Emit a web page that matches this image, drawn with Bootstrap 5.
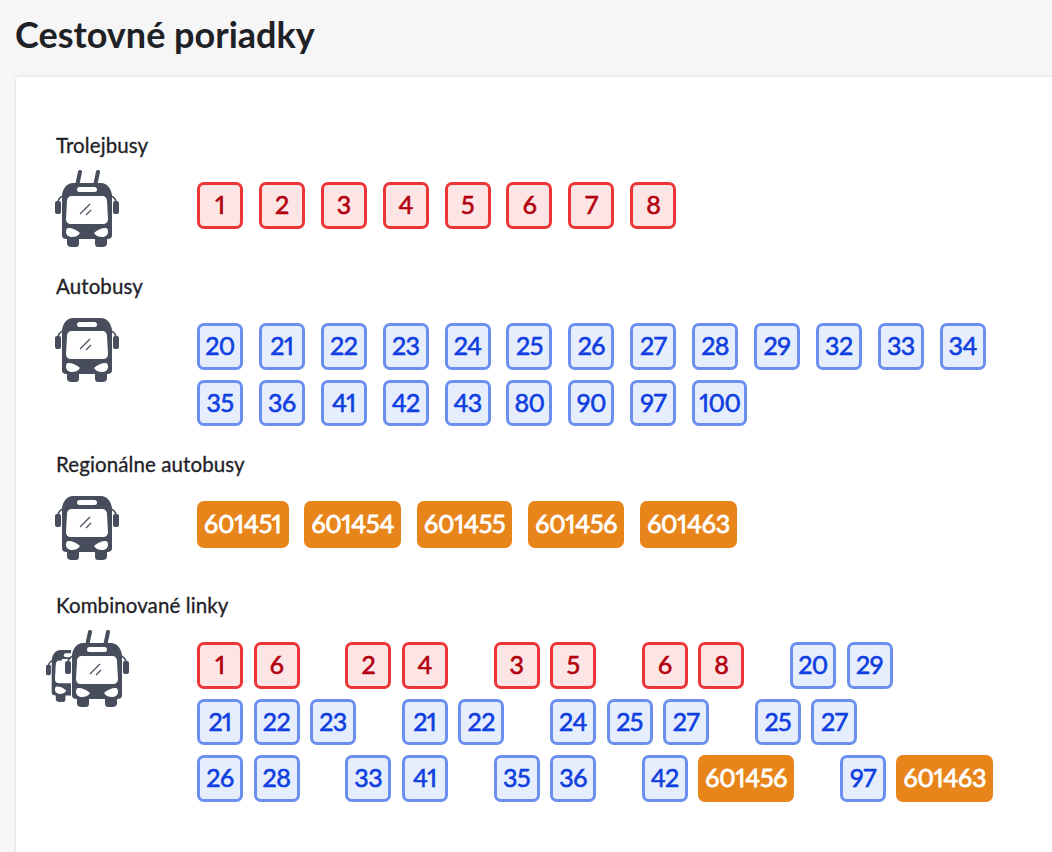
<!DOCTYPE html>
<html lang="sk">
<head>
    <meta charset="UTF-8" />
    <title>Cestovné poriadky</title>
    <meta name="viewport" content="width=device-width, initial-scale=1" />
    <link href="https://cdn.jsdelivr.net/npm/bootstrap@5.3.0/dist/css/bootstrap.min.css" rel="stylesheet" />
    <style>
        body {
            background-color: #f6f6f6;
            color: #1e2126;
            font-family: "Lato", "Open Sans", sans-serif;
            height: 852px;
            overflow: hidden;
        }
        .page-title {
            font-size: 36px;
            font-weight: 700;
            line-height: 40px;
            margin: 0;
            padding: 14px 0 22px 15px;
        }
        .panel {
            background: #fff;
            border: 1px solid #e8e8e8;
            border-right: 0;
            border-radius: 5px 0 0 0;
            box-shadow: 0 -1px 3px rgba(0, 0, 0, .05);
            margin-left: 15px;
            padding: 56px 0 0 40px;
            height: 800px;
        }
        .line-title {
            font-size: 20.5px;
            font-weight: 400;
            letter-spacing: .1px;
            -webkit-text-stroke: .3px #1e2126;
            line-height: 24px;
            margin-bottom: 13px;
        }
        .line-row { min-height: 104px; }
        .icon-col { width: 141px; flex: none; }
        .icon-col svg { display: block; margin-left: -1px; }
        .icon-col .bus-icon { margin-top: 7px; }
        .icon-col .combo-icon { margin-left: -10px; }
        .tags { padding: 12px 0 16px; }
        .tag-line { display: flex; gap: 15.9px; margin-bottom: 10px; }
        .tag-line.combo { gap: 45.75px; }
        .tag-group { display: flex; gap: 10.5px; }
        .tag {
            display: block;
            height: 46.5px;
            min-width: 46px;
            padding: 0 4px;
            border: 3px solid;
            border-radius: 7px;
            text-align: center;
            font-size: 25px;
            font-weight: 400;
            font-variant-numeric: proportional-nums;
            letter-spacing: -.5px;
            line-height: 39px;
            text-decoration: none;
            -webkit-text-stroke: .6px currentColor;
        }
        .tag-red { background: #fde5e6; border-color: #ec3537; color: #b3000f; }
        .tag-blue { background: #e6edfd; border-color: #6b8ff0; color: #0f3fe0; }
        .tag-orange { background: #e8851a; border-color: #e8851a; color: #fff; letter-spacing: -.2px; -webkit-text-stroke: .8px #fff; }
    </style>
</head>
<body>

<svg width="0" height="0" class="d-block position-absolute">
    <symbol id="bus" viewBox="0 0 64 64">
        <path fill="#474d5c" d="M18 0H46C52 0 56 5 57 12V52C57 55 55 56 52 56V60C52 63 50 64 47 64H43C41 64 40 63 40 60V56H24V60C24 63 23 64 21 64H17C14 64 12 63 12 60V56C9 56 7 55 7 52V12C8 5 12 0 18 0Z" />
        <path fill="none" stroke="#474d5c" stroke-width="1.6" d="M8 13C5 14 3.500 16 3 19M56 13C59 14 60.500 16 61 19" />
        <rect x="0" y="18" width="6" height="13" rx="2" fill="#474d5c" />
        <rect x="58" y="18" width="6" height="13" rx="2" fill="#474d5c" />
        <rect x="22" y="4" width="20" height="5" rx="2.5" fill="#fff" />
        <path fill="#fff" d="M17 13H47C50 13 52 15 52 18L53 36C53 39 51 41 48 41H16C13 41 11 39 11 36L12 18C12 15 14 13 17 13Z" />
        <path fill="#fff" d="M13 45C18 45 22 47 25 50C23 53 20 54 17 54C14 54 11 52 11 49C11 46 12 45 13 45ZM51 45C46 45 42 47 39 50C41 53 44 54 47 54C50 54 53 52 53 49C53 46 52 45 51 45Z" />
        <path stroke="#474d5c" stroke-width="1.2" d="M25 31L35 21M31 32L36 27" />
    </symbol>
    <symbol id="poles" viewBox="0 0 64 20">
        <path stroke="#474d5c" stroke-width="4" stroke-linecap="round" fill="none" d="M22 16L25 2M40 16L43 2" />
    </symbol>
</svg>

<h1 class="page-title">Cestovné poriadky</h1>

<div class="panel">
    <div class="line-title">Trolejbusy</div>
    <div class="line-row d-flex">
        <div class="icon-col">
            <svg width="64" height="77" viewBox="0 0 64 77"><use href="#poles" width="64" height="20" /><use href="#bus" y="13" width="64" height="64" /></svg>
        </div>
        <div class="tags" id="trolley"></div>
    </div>

    <div class="line-title">Autobusy</div>
    <div class="line-row d-flex">
        <div class="icon-col">
            <svg class="bus-icon" width="64" height="64"><use href="#bus" width="64" height="64" /></svg>
        </div>
        <div class="tags" id="bus-lines"></div>
    </div>

    <div class="line-title">Regionálne autobusy</div>
    <div class="line-row d-flex">
        <div class="icon-col">
            <svg class="bus-icon" width="64" height="64"><use href="#bus" width="64" height="64" /></svg>
        </div>
        <div class="tags" id="regional"></div>
    </div>

    <div class="line-title">Kombinované linky</div>
    <div class="line-row d-flex">
        <div class="icon-col">
            <svg class="combo-icon" width="83" height="78" viewBox="0 0 83 78">
                <use href="#bus" x="0" y="20" width="52" height="52" />
                <rect x="25" y="14" width="30" height="64" fill="#fff" />
                <rect x="16" y="29" width="10" height="17" fill="#fff" />
                <use href="#poles" x="19" width="64" height="20" />
                <use href="#bus" x="19" y="13" width="64" height="64" />
            </svg>
        </div>
        <div class="tags" id="combined"></div>
    </div>
</div>

<script>
    function tagClass(n) {
        if (n > 1000) return 'tag-orange';
        return n < 10 ? 'tag-red' : 'tag-blue';
    }

    function tagHtml(n) {
        return `<a href="#" class="tag ${tagClass(n)}">${n}</a>`;
    }

    function fillLines(id, lines) {
        document.getElementById(id).innerHTML = lines
            .map((line) => `<div class="tag-line">${line.map(tagHtml).join('')}</div>`)
            .join('');
    }

    fillLines('trolley', [[1, 2, 3, 4, 5, 6, 7, 8]]);
    fillLines('bus-lines', [
        [20, 21, 22, 23, 24, 25, 26, 27, 28, 29, 32, 33, 34],
        [35, 36, 41, 42, 43, 80, 90, 97, 100],
    ]);
    fillLines('regional', [[601451, 601454, 601455, 601456, 601463]]);

    const combined = [
        [[1, 6], [2, 4], [3, 5], [6, 8], [20, 29]],
        [[21, 22, 23], [21, 22], [24, 25, 27], [25, 27]],
        [[26, 28], [33, 41], [35, 36], [42, 601456], [97, 601463]],
    ];
    document.getElementById('combined').innerHTML = combined
        .map((line) => {
            const groups = line.map((g) => `<div class="tag-group">${g.map(tagHtml).join('')}</div>`);
            return `<div class="tag-line combo">${groups.join('')}</div>`;
        })
        .join('');
</script>

<script src="https://cdn.jsdelivr.net/npm/bootstrap@5.3.0/dist/js/bootstrap.bundle.min.js"></script>
</body>
</html>
